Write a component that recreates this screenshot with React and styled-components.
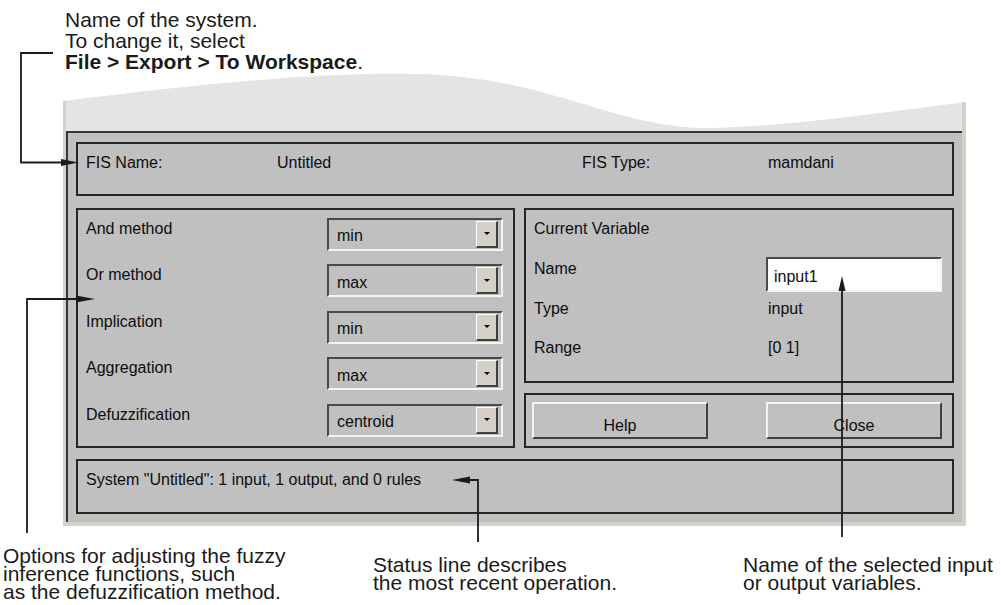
import React from "react";
import styled, { createGlobalStyle } from "styled-components";

const GlobalStyle = createGlobalStyle`
  html, body { margin: 0; padding: 0; background: #ffffff; }
  body { font-family: "Liberation Sans", Arial, Helvetica, sans-serif; }
`;

const Page = styled.div`
  position: relative;
  width: 1001px;
  height: 605px;
  overflow: hidden;
  background: #ffffff;
`;

const Note = styled.div`
  font-family: "Liberation Sans", Arial, Helvetica, sans-serif;
  font-size: 21px;
  line-height: ${(p) => p.$lh}px;
  color: #1a1a1a;
  padding-top: ${(p) => p.$top}px;
  margin-left: ${(p) => p.$x || 0}px;
  white-space: nowrap;
`;

const Strong = styled.b`
  font-weight: 700;
`;

const Window = styled.div`
  margin-left: 63px;
  width: 903px;
  font-family: "Liberation Sans", Arial, Helvetica, sans-serif;
  font-size: 16px;
  line-height: 18px;
  color: #0d0d0d;
`;

const Wave = styled.svg`
  display: block;
`;

const Frame = styled.div`
  box-sizing: border-box;
  width: 903px;
  border-left: 3px solid #d4d0c8;
  border-right: 4px solid #d4d0c8;
  border-bottom: 4px solid #d4d0c8;
`;

const Surface = styled.div`
  background: #c0c0c0;
  border-top: 2px solid #363636;
  border-left: 2px solid #363636;
  padding: 9px 8px 8px 8px;
  display: flex;
  flex-direction: column;
`;

const Panel = styled.div`
  box-sizing: border-box;
  border: 2px solid #262626;
  background: #c0c0c0;
  height: ${(p) => p.$h}px;
`;

const InfoPanel = styled(Panel)`
  padding: 10.45px 8px 0 8px;
  display: grid;
  grid-template-columns: 191px 305px 186px 1fr;
  align-items: start;
`;

const Middle = styled.div`
  display: grid;
  grid-template-columns: 439px 1fr;
  column-gap: 9px;
  margin: 12px 0 11px;
`;

const OptionsPanel = styled(Panel)`
  padding: 7.5px 10px 0 8px;
  display: flex;
  flex-direction: column;
  gap: 13.6px;
`;

const OptionRow = styled.div`
  display: flex;
  justify-content: space-between;
  align-items: flex-start;
  height: 33px;
`;

const OptionLabel = styled.span`
  margin-top: 2px;
`;

const Dropdown = styled.div`
  box-sizing: border-box;
  width: 176px;
  height: 33px;
  border: 2px solid;
  border-color: #4a4a4a #f4f4f4 #f4f4f4 #4a4a4a;
  display: flex;
  align-items: flex-start;
  padding: 1px 3px 1px 8px;
`;

const DropValue = styled.span`
  flex: 1;
  margin-top: 6.45px;
`;

const DropButton = styled.span`
  box-sizing: border-box;
  width: 22px;
  height: 27px;
  background: #d4d0c8;
  border-style: solid;
  border-width: 1px 2px 2px 1px;
  border-color: #ffffff #404040 #404040 #ffffff;
  display: flex;
  align-items: center;
  justify-content: center;
`;

const Caret = styled.span`
  width: 0;
  height: 0;
  border-left: 3px solid transparent;
  border-right: 3px solid transparent;
  border-top: 3px solid #000000;
`;

const RightColumn = styled.div`
  display: flex;
  flex-direction: column;
  gap: 10px;
`;

const VarPanel = styled(Panel)`
  padding: 10.45px 10px 0 8px;
  display: flex;
  flex-direction: column;
`;

const VarRow = styled.div`
  display: grid;
  grid-template-columns: 1fr 176px;
  align-items: start;
  margin-top: ${(p) => p.$mt || 0}px;
`;

const VarLabel = styled.span`
  margin-top: ${(p) => p.$mt || 0}px;
`;

const VarValue = styled.span`
  padding-left: 2px;
`;

const NameInput = styled.div`
  box-sizing: border-box;
  width: 176px;
  height: 35px;
  background: #ffffff;
  border: 2px solid;
  border-color: #4a4a4a #f4f4f4 #f4f4f4 #4a4a4a;
  padding: 9.45px 0 0 6px;
`;

const ButtonPanel = styled(Panel)`
  padding: 7px 0 0 6px;
  display: grid;
  grid-template-columns: 176px 176px;
  column-gap: 58px;
  align-items: start;
`;

const PushButton = styled.button`
  box-sizing: border-box;
  height: 37px;
  margin: 0;
  padding: 10.45px 0 0;
  background: #c0c0c0;
  border: 2px solid;
  border-color: #f4f4f4 #404040 #404040 #f4f4f4;
  font: inherit;
  color: inherit;
  text-align: center;
  display: block;
`;

const StatusPanel = styled(Panel)`
  padding: 10.45px 8px 0 8px;
`;

const BottomNotes = styled.div`
  display: grid;
  grid-template-columns: 370px 370px 1fr;
  padding-left: 3px;
  align-items: start;
`;

const Overlay = styled.svg`
  position: absolute;
  left: 0;
  top: 0;
  pointer-events: none;
`;

const WAVE =
  "M0,29 C120,14 250,0 350,2 C430,3 480,20 540,38 C590,52 620,57 650,56 C740,53 820,40 903,30 L903,59 L0,59 Z";

const options = [
  ["And method", "min"],
  ["Or method", "max"],
  ["Implication", "min"],
  ["Aggregation", "max"],
  ["Defuzzification", "centroid"],
];

export default function App() {
  return (
    <Page>
      <GlobalStyle />
      <Note $x={65} $top={9} $lh={21}>
        Name of the system.
        <br />
        To change it, select
        <br />
        <Strong>File &gt; Export &gt; To Workspace</Strong>.
      </Note>

      <Window>
        <Wave width="903" height="59" viewBox="0 0 903 59">
          <defs>
            <clipPath id="waveClip">
              <path d={WAVE} />
            </clipPath>
          </defs>
          <path d={WAVE} fill="#e4e4e4" />
          <g clipPath="url(#waveClip)" fill="#d4d0c8">
            <rect x="0" y="0" width="3" height="59" />
            <rect x="899" y="0" width="4" height="59" />
          </g>
        </Wave>
        <Frame>
          <Surface>
            <InfoPanel $h={54}>
              <span>FIS Name:</span>
              <span>Untitled</span>
              <span>FIS Type:</span>
              <span>mamdani</span>
            </InfoPanel>

            <Middle>
              <OptionsPanel $h={240}>
                {options.map(([label, value]) => (
                  <OptionRow key={label}>
                    <OptionLabel>{label}</OptionLabel>
                    <Dropdown>
                      <DropValue>{value}</DropValue>
                      <DropButton>
                        <Caret />
                      </DropButton>
                    </Dropdown>
                  </OptionRow>
                ))}
              </OptionsPanel>

              <RightColumn>
                <VarPanel $h={175}>
                  <span>Current Variable</span>
                  <VarRow $mt={18.55}>
                    <VarLabel $mt={3.45}>Name</VarLabel>
                    <NameInput>input1</NameInput>
                  </VarRow>
                  <VarRow $mt={8.45}>
                    <VarLabel>Type</VarLabel>
                    <VarValue>input</VarValue>
                  </VarRow>
                  <VarRow $mt={21}>
                    <VarLabel>Range</VarLabel>
                    <VarValue>[0 1]</VarValue>
                  </VarRow>
                </VarPanel>
                <ButtonPanel $h={55}>
                  <PushButton>Help</PushButton>
                  <PushButton>Close</PushButton>
                </ButtonPanel>
              </RightColumn>
            </Middle>

            <StatusPanel $h={55}>
              System "Untitled": 1 input, 1 output, and 0 rules
            </StatusPanel>
          </Surface>
        </Frame>
      </Window>

      <BottomNotes>
        <Note $top={20.5} $lh={18}>
          Options for adjusting the fuzzy
          <br />
          inference functions, such
          <br />
          as the defuzzification method.
        </Note>
        <Note $top={29.5} $lh={18}>
          Status line describes
          <br />
          the most recent operation.
        </Note>
        <Note $top={29.5} $lh={18}>
          Name of the selected input
          <br />
          or output variables.
        </Note>
      </BottomNotes>

      <Overlay width="1001" height="605" viewBox="0 0 1001 605">
        <g stroke="#1a1a1a" strokeWidth="1.8" fill="none">
          <polyline points="53,53 21,53 21,162.5 64,162.5" />
          <polyline points="27,533 27,299 77,299" />
          <polyline points="468,480 478,480 478,542" />
          <polyline points="842,537 842,288" />
        </g>
        <g fill="#1a1a1a">
          <polygon points="78,162.5 61,159 61,166" />
          <polygon points="95,299 76,295.5 76,302.5" />
          <polygon points="452,480 470,476.5 470,483.5" />
          <polygon points="842,276 838.5,291 845.5,291" />
        </g>
      </Overlay>
    </Page>
  );
}
